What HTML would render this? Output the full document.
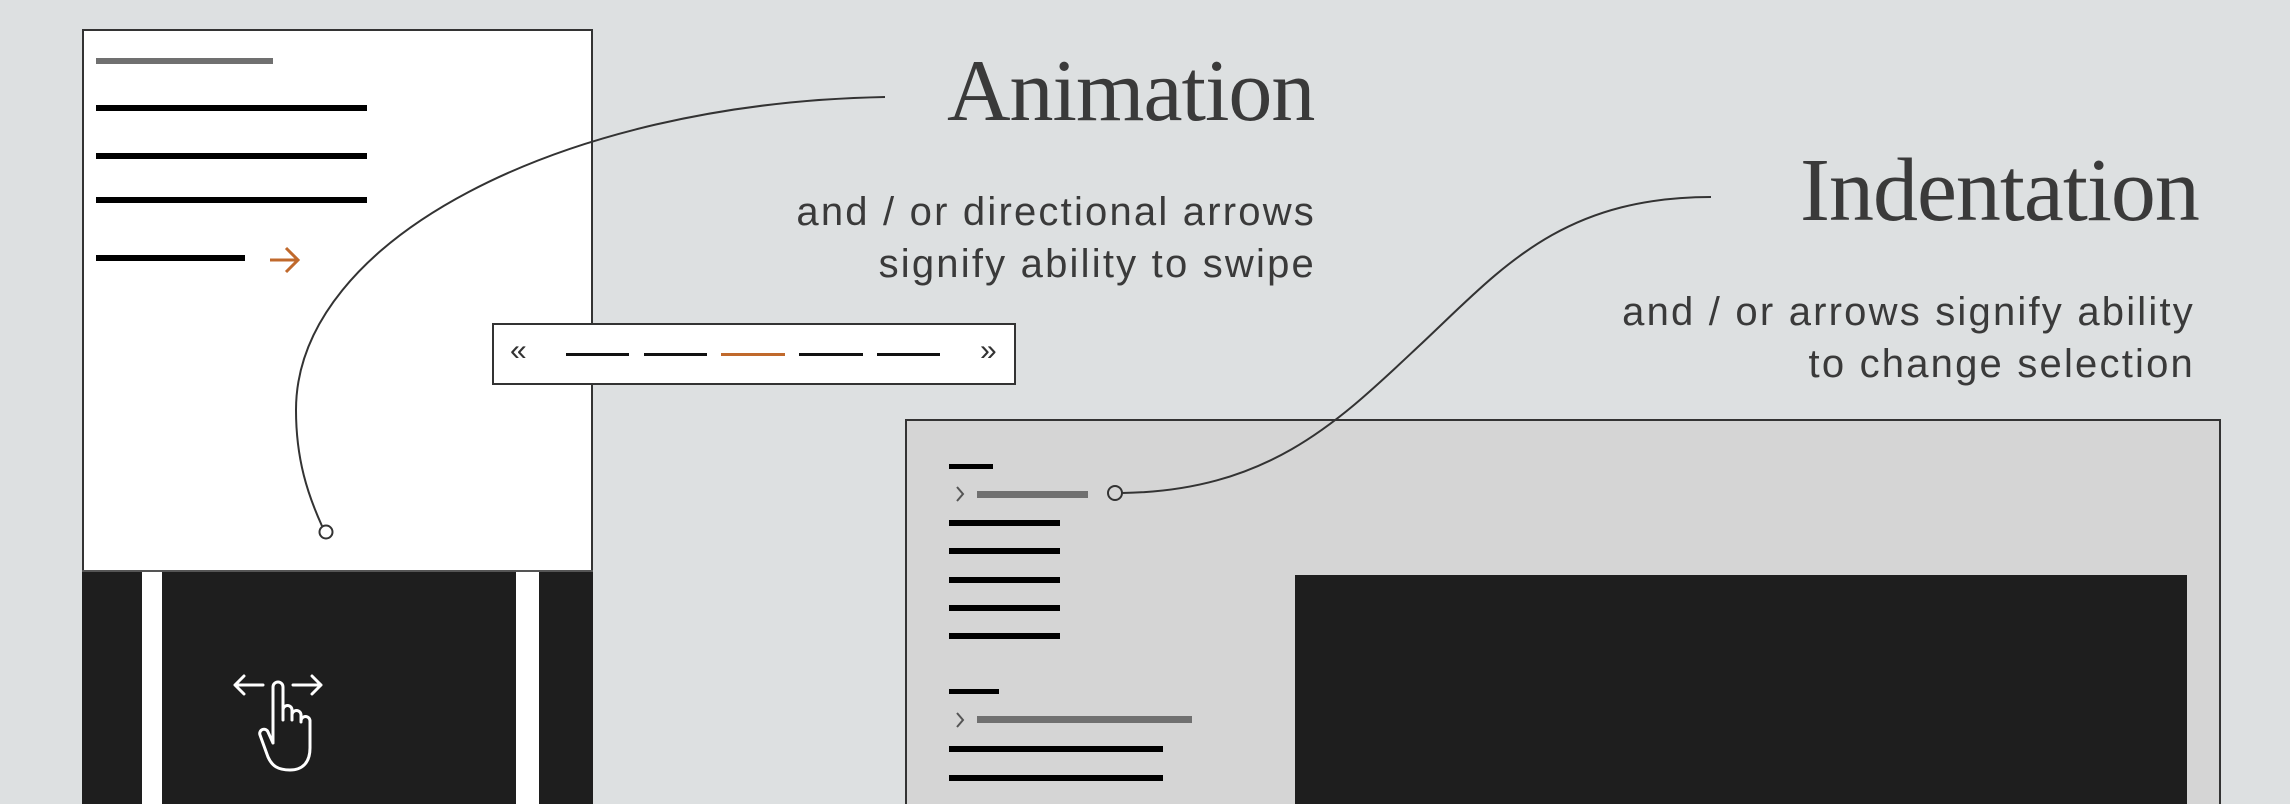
<!DOCTYPE html>
<html><head><meta charset="utf-8"><style>
html,body{margin:0;padding:0;width:2290px;height:804px;overflow:hidden}
body{position:relative;background:#dde0e1;font-family:"Liberation Sans",sans-serif}
.a{position:absolute}
.ttl{font-family:"Liberation Serif",serif;color:#3a3a3a;font-size:88px;line-height:1;white-space:nowrap;letter-spacing:-1px}
.sub{color:#3a3a3a;font-size:40px;line-height:52px;text-align:right;white-space:nowrap;letter-spacing:2.2px}
</style></head><body>
<!-- left phone panel -->
<div class="a" style="left:82px;top:29px;width:511px;height:790px;background:#fff;border:2px solid #333;box-sizing:border-box"></div>
<div class="a" style="left:96px;top:58px;width:177px;height:6px;background:#707070"></div>
<div class="a" style="left:96px;top:105px;width:271px;height:6px;background:#000"></div>
<div class="a" style="left:96px;top:153px;width:271px;height:6px;background:#000"></div>
<div class="a" style="left:96px;top:197px;width:271px;height:6px;background:#000"></div>
<div class="a" style="left:96px;top:255px;width:149px;height:6px;background:#000"></div>
<svg class="a" style="left:266px;top:244px" width="40" height="32"><path d="M4,16 H32 M20,4 L32,16 L20,28" fill="none" stroke="#c0692c" stroke-width="3"/></svg>
<div class="a" style="left:82px;top:571px;width:60px;height:240px;background:#1e1e1e"></div>
<div class="a" style="left:162px;top:571px;width:354px;height:240px;background:#1e1e1e"></div>
<div class="a" style="left:539px;top:571px;width:54px;height:240px;background:#1e1e1e"></div>
<div class="a" style="left:82px;top:570px;width:511px;height:2px;background:#555"></div>
<svg class="a" style="left:220px;top:660px" width="120" height="120"><g fill="none" stroke="#fff" stroke-width="3" stroke-linejoin="round" stroke-linecap="round">
<path d="M15,25 H43 M24,16 L15,25 L24,34 M73,25 H101 M92,16 L101,25 L92,34"/>
<path d="M53,83 L53,27 A5,5 0 0 1 63,27 L63,60 L63,50 A4.5,4.5 0 0 1 72,50 L72,60 L72,55 A4.5,4.5 0 0 1 81,55 L81,62 L81,61 A4.5,4.5 0 0 1 90,61 L90,88 C90,103 82,110 70,110 C58,110 52,106 48,97 L40,75 A4,4 0 0 1 48,72 L53,83"/>
</g></svg>
<!-- swipe bar -->
<div class="a" style="left:492px;top:323px;width:524px;height:62px;background:#fff;border:2px solid #333;box-sizing:border-box"></div>
<div class="a" style="left:510px;top:334px;font-size:30px;color:#333">«</div>
<div class="a" style="left:980px;top:334px;font-size:30px;color:#333">»</div>
<div class="a" style="left:566px;top:353px;width:63px;height:3px;background:#111"></div>
<div class="a" style="left:644px;top:353px;width:63px;height:3px;background:#111"></div>
<div class="a" style="left:721px;top:353px;width:64px;height:3px;background:#c0692c"></div>
<div class="a" style="left:799px;top:353px;width:64px;height:3px;background:#111"></div>
<div class="a" style="left:877px;top:353px;width:63px;height:3px;background:#111"></div>
<!-- gray panel -->
<div class="a" style="left:905px;top:419px;width:1316px;height:400px;background:#d5d5d5;border:2px solid #333;box-sizing:border-box"></div>
<div class="a" style="left:1295px;top:575px;width:892px;height:240px;background:#1e1e1e"></div>
<div class="a" style="left:949px;top:464px;width:44px;height:5px;background:#000"></div>
<svg class="a" style="left:952px;top:484px" width="16" height="20"><path d="M5,3 L11,10 L5,17" fill="none" stroke="#555" stroke-width="2"/></svg>
<div class="a" style="left:977px;top:491px;width:111px;height:7px;background:#707070"></div>
<div class="a" style="left:949px;top:520px;width:111px;height:6px;background:#000"></div>
<div class="a" style="left:949px;top:548px;width:111px;height:6px;background:#000"></div>
<div class="a" style="left:949px;top:577px;width:111px;height:6px;background:#000"></div>
<div class="a" style="left:949px;top:605px;width:111px;height:6px;background:#000"></div>
<div class="a" style="left:949px;top:633px;width:111px;height:6px;background:#000"></div>
<div class="a" style="left:949px;top:689px;width:50px;height:5px;background:#000"></div>
<svg class="a" style="left:952px;top:710px" width="16" height="20"><path d="M5,3 L11,10 L5,17" fill="none" stroke="#555" stroke-width="2"/></svg>
<div class="a" style="left:977px;top:716px;width:215px;height:7px;background:#707070"></div>
<div class="a" style="left:949px;top:746px;width:214px;height:6px;background:#000"></div>
<div class="a" style="left:949px;top:775px;width:214px;height:6px;background:#000"></div>
<!-- curves -->
<svg class="a" style="left:0;top:0" width="2290" height="804"><g fill="none" stroke="#333" stroke-width="2">
<path d="M885,97 C560,103 296,240 296,410 C296,460 308,495 322,526"/>
<circle cx="326" cy="532" r="6.5"/>
<path d="M1711,197 C1560,197 1500,270 1420,345 C1340,420 1270,491 1122,493"/>
<circle cx="1115" cy="493" r="7"/>
</g></svg>
<!-- text -->
<div class="a ttl" style="left:947px;top:48px">Animation</div>
<div class="a sub" style="right:974px;top:186px">and / or directional arrows<br>signify ability to swipe</div>
<div class="a ttl" style="left:1800px;top:146px;font-size:90px">Indentation</div>
<div class="a sub" style="right:95px;top:286px">and / or arrows signify ability<br>to change selection</div>
</body></html>
